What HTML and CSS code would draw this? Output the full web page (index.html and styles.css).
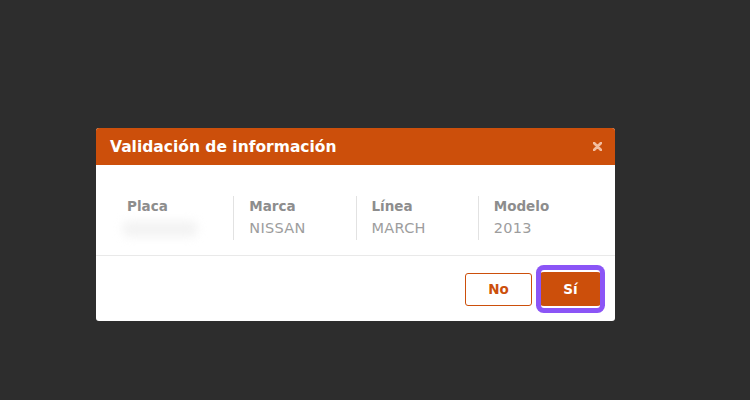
FILE: index.html
```html
<!DOCTYPE html>
<html lang="es">
<head>
<meta charset="utf-8">
<link rel="stylesheet" href="styles.css">
</head>
<body>
<div class="overlay">
  <div class="modal">
    <div class="modal-header">
      <span class="modal-title">Validación de información</span>
      <svg class="close" width="9" height="9" viewBox="0 0 9 9"><path d="M1 1L8 8M8 1L1 8" stroke="#f2bd9f" stroke-width="2.6" stroke-linecap="round"/></svg>
    </div>
    <div class="modal-body">
      <div class="col">
        <div class="label">Placa</div>
        <div class="value"><span class="blurred"></span></div>
      </div>
      <div class="col">
        <div class="label">Marca</div>
        <div class="value">NISSAN</div>
      </div>
      <div class="col">
        <div class="label">Línea</div>
        <div class="value">MARCH</div>
      </div>
      <div class="col">
        <div class="label">Modelo</div>
        <div class="value">2013</div>
      </div>
    </div>
    <div class="modal-footer">
      <button class="btn btn-outline">No</button>
      <button class="btn btn-primary">Sí</button>
    </div>
  </div>
</div>
</body>
</html>
```
FILE: styles.css
```css
html, body {
  margin: 0;
  padding: 0;
  background: #2d2d2d;
  width: 750px;
  height: 400px;
  overflow: hidden;
  font-family: "DejaVu Sans", "Liberation Sans", sans-serif;
}
.overlay {
  padding: 128px 0 0 96px;
}
.modal {
  width: 519px;
  background: #ffffff;
  border-radius: 3px;
  overflow: hidden;
}
.modal-header {
  height: 37px;
  background: #cc4f0b;
  display: flex;
  align-items: center;
  justify-content: space-between;
  padding: 0 13px 0 14px;
}
.modal-title {
  color: #ffffff;
  font-weight: bold;
  font-size: 15.5px;
  letter-spacing: 0;
}
.close {
  display: block;
}
.modal-body {
  display: grid;
  grid-template-columns: repeat(4, 1fr);
  padding: 31px 15px 15px 15px;
  border-bottom: 1px solid #e9e9e9;
}
.col {
  padding-left: 15px;
  border-left: 1px solid #e2e2e2;
  height: 44px;
}
.col:first-child {
  border-left: 1px solid transparent;
}
.label {
  font-size: 13.5px;
  font-weight: bold;
  color: #8d8d8d;
  line-height: 21px;
}
.value {
  font-size: 14.5px;
  letter-spacing: 0.3px;
  color: #9d9d9d;
  line-height: 23px;
  height: 23px;
}
.blurred {
  display: inline-block;
  width: 76px;
  height: 16px;
  margin-left: -5px;
  margin-top: 4px;
  vertical-align: top;
  background: #f3f3f3;
  border-radius: 8px;
  filter: blur(5px);
}
.modal-footer {
  height: 65px;
  display: flex;
  justify-content: flex-end;
  align-items: center;
  gap: 9px;
  padding-right: 15px;
}
.btn {
  font-family: "DejaVu Sans", "Liberation Sans", sans-serif;
  font-weight: bold;
  font-size: 13.5px;
  cursor: pointer;
  border-radius: 3px;
}
.btn-outline {
  width: 67px;
  height: 33px;
  background: #ffffff;
  border: 1px solid #cc4f0b;
  color: #cc4f0b;
  margin-top: 1px;
}
.btn-primary {
  width: 59px;
  height: 38px;
  background: #cc4f0b;
  color: #ffffff;
  border: none;
  border-top: 2px solid #ffffff;
  border-bottom: 2px solid #ffffff;
  box-shadow: 0 0 0 5px #8b55f6;
}
```
